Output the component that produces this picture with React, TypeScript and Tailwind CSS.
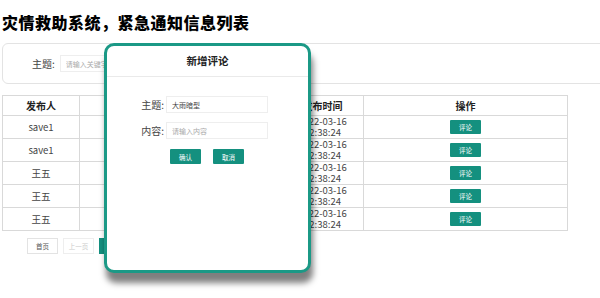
const rows = [
  { user: "save1", time: ["2022-03-16", "12:38:24"] },
  { user: "save1", time: ["2022-03-16", "12:38:24"] },
  { user: "王五", time: ["2022-03-16", "12:38:24"] },
  { user: "王五", time: ["2022-03-16", "12:38:24"] },
  { user: "王五", time: ["2022-03-16", "12:38:24"] },
];

const font = "font-['Noto_Sans_CJK_SC','Noto_Sans',sans-serif]";

export default function App() {
  return (
    <div className={`relative w-[600px] h-[298px] overflow-hidden bg-white text-[#333] ${font}`}>
      {/* Page title */}
      <h1 className="pt-[12px] pl-[2px] text-[16px] leading-[20px] font-black tracking-[0.5px] text-black">
        灾情救助系统，紧急通知信息列表
      </h1>

      {/* Search bar */}
      <div className="mt-[11px] ml-[2px] w-[640px] h-[41px] border border-[#e3e3e3] rounded-[6px] flex items-center pl-[29px]">
        <span className="text-[10px] leading-[14px] text-[#444]">主题:</span>
        <input
          className="ml-[5px] w-[110px] h-[17px] border border-[#eeeeee] px-[5px] text-[7px] outline-none placeholder:text-[#aaa]"
          placeholder="请输入关键字"
        />
      </div>

      {/* Table (middle columns sit under the dialog) */}
      <table className="mt-[11px] ml-[2px] w-[565px] border-collapse table-fixed text-center">
        <colgroup>
          <col className="w-[77px]" />
          <col className="w-[101px]" />
          <col className="w-[101px]" />
          <col className="w-[82px]" />
          <col className="w-[204px]" />
        </colgroup>
        <thead>
          <tr className="h-[20px] text-[10px] leading-[14px] font-bold text-[#222]">
            <th className="border border-[#d9d9d9]">发布人</th>
            <th className="border border-[#d9d9d9]"></th>
            <th className="border border-[#d9d9d9]"></th>
            <th className="border border-[#d9d9d9]">发布时间</th>
            <th className="border border-[#d9d9d9]">操作</th>
          </tr>
        </thead>
        <tbody>
          {rows.map((r, i) => (
            <tr key={i} className="h-[23px] text-[9.5px] leading-[11px] text-[#444]">
              <td className="border border-[#d9d9d9]">{r.user}</td>
              <td className="border border-[#d9d9d9]"></td>
              <td className="border border-[#d9d9d9]"></td>
              <td className="border border-[#d9d9d9]">
                <div>{r.time[0]}</div>
                <div>{r.time[1]}</div>
              </td>
              <td className="border border-[#d9d9d9]">
                <button className="w-[31px] h-[14px] rounded-[1px] bg-[#14907f] text-white text-[6.5px] leading-[14px] align-middle">
                  评论
                </button>
              </td>
            </tr>
          ))}
        </tbody>
      </table>

      {/* Pagination */}
      <div className="mt-[7px] pl-[27px] flex gap-[5px]">
        <button className="w-[31px] h-[16px] border border-[#e3e3e3] text-[6.5px] leading-[10px] text-[#555]">首页</button>
        <button className="w-[31px] h-[16px] border border-[#eeeeee] text-[6.5px] leading-[10px] text-[#ccc]">上一页</button>
        <button className="w-[31px] h-[16px] bg-[#14907f] text-[6.5px] leading-[10px] text-white">1</button>
      </div>

      {/* Dialog */}
      <div className="absolute left-[104px] top-[43px] w-[207px] h-[230px] border-[3px] border-[#1b9986] rounded-[10px] bg-white shadow-[2px_10px_6px_rgba(0,0,0,0.5)]">
        <div className="h-[31px] flex items-center justify-center border-b border-[#eaeaea] text-[10.5px] leading-[14px] font-bold text-[#222]">
          新增评论
        </div>
        <div className="pt-[19px] flex flex-col gap-[9px]">
          <div className="flex items-center">
            <span className="w-[59px] pr-[2px] text-right text-[10px] leading-[14px] text-[#444]">主题:</span>
            <input
              className="w-[102px] h-[17px] border border-[#eeeeee] px-[5px] text-[7px] text-[#444] outline-none"
              defaultValue="大雨暗型"
            />
          </div>
          <div className="flex items-center">
            <span className="w-[59px] pr-[2px] text-right text-[10px] leading-[14px] text-[#444]">内容:</span>
            <input
              className="w-[102px] h-[17px] border border-[#eeeeee] px-[5px] text-[7px] outline-none placeholder:text-[#aaa]"
              placeholder="请输入内容"
            />
          </div>
          <div className="mt-[1px] pl-[63px] flex gap-[12px]">
            <button className="w-[31px] h-[15px] rounded-[1px] bg-[#14907f] text-white text-[6.5px] leading-[10px]">确认</button>
            <button className="w-[31px] h-[15px] rounded-[1px] bg-[#14907f] text-white text-[6.5px] leading-[10px]">取消</button>
          </div>
        </div>
      </div>
    </div>
  );
}
